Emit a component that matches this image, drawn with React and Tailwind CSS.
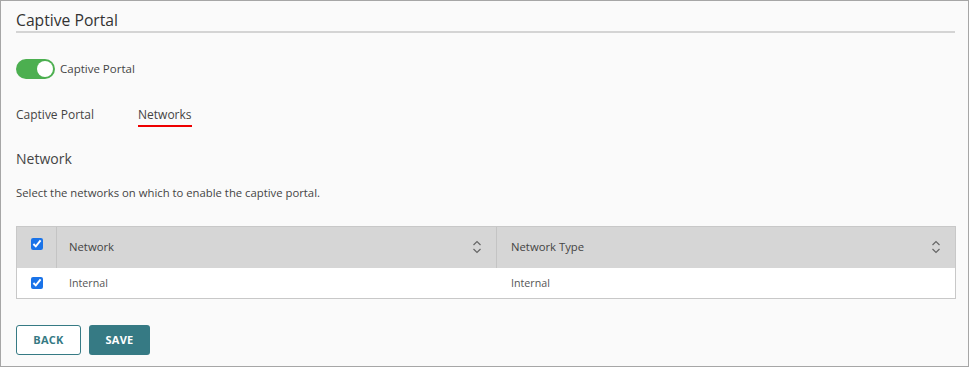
import { useState } from 'react'

function SortIcon() {
  return (
    <svg width="10" height="14" viewBox="0 0 10 14" fill="none" stroke="#666" strokeWidth="1.2">
      <path d="M1.5 5 L5 1.5 L8.5 5" />
      <path d="M1.5 9 L5 12.5 L8.5 9" />
    </svg>
  )
}

function Check({ checked, onChange }) {
  return (
    <input
      type="checkbox"
      checked={checked}
      onChange={onChange}
      className="w-[12px] h-[12px] accent-[#1a73e8] m-0"
    />
  )
}

export default function App() {
  const [enabled, setEnabled] = useState(true)
  const [tab, setTab] = useState('networks')
  const [all, setAll] = useState(true)
  const [row, setRow] = useState(true)

  return (
    <div
      className="w-[969px] h-[367px] bg-[#fafafa] border border-[#a6a6a6] text-[#333] overflow-hidden"
      style={{ fontFamily: '"Open Sans", "Noto Sans", sans-serif' }}
    >
      <div className="px-[15px]">
        <h1 className="text-[15.7px] leading-[22px] pt-[8px] border-b-2 border-[#d4d4d4] mr-[-2px] text-[#333]">
          Captive Portal
        </h1>

        <div className="flex items-center gap-[5px] mt-[26px]">
          <button
            onClick={() => setEnabled(v => !v)}
            className={`w-[39px] h-[20px] rounded-full flex items-center px-[2px] ${enabled ? 'bg-[#4caf50] justify-end' : 'bg-[#bbb] justify-start'}`}
          >
            <span className="w-[16px] h-[16px] rounded-full bg-white block" />
          </button>
          <span className="text-[11.5px] text-[#444]">Captive Portal</span>
        </div>

        <div className="flex gap-[44px] mt-[27px] text-[12px]">
          <button
            onClick={() => setTab('portal')}
            className={`pb-[1px] border-b-2 ${tab === 'portal' ? 'border-[#e00]' : 'border-transparent'} text-[#444]`}
          >
            Captive Portal
          </button>
          <button
            onClick={() => setTab('networks')}
            className={`pb-[1px] border-b-2 ${tab === 'networks' ? 'border-[#e00]' : 'border-transparent'} text-[#444]`}
          >
            Networks
          </button>
        </div>

        <h2 className="text-[14px] text-[#444] mt-[21px]">Network</h2>
        <p className="text-[11.3px] text-[#444] mt-[16px]">Select the networks on which to enable the captive portal.</p>

        <div className="mt-[24px] w-[940px] border border-[#c8c8c8] bg-white text-[11.3px]">
          <div className="flex h-[41px] bg-[#d6d6d6] text-[#444]">
            <div className="w-[40px] flex items-center justify-center border-r border-[#c4c4c4] pb-[6px]">
              <Check checked={all} onChange={() => { setAll(!all); setRow(!all) }} />
            </div>
            <div className="w-[440px] flex items-center justify-between pl-[12px] pr-[14px] border-r border-[#c4c4c4]">
              <span>Network</span>
              <SortIcon />
            </div>
            <div className="flex-1 flex items-center justify-between pl-[14px] pr-[14px]">
              <span>Network Type</span>
              <SortIcon />
            </div>
          </div>
          <div className="flex h-[30px] text-[10.7px] text-[#555]">
            <div className="w-[40px] flex items-center justify-center">
              <Check checked={row} onChange={() => setRow(!row)} />
            </div>
            <div className="w-[440px] flex items-center pl-[12px]">Internal</div>
            <div className="flex-1 flex items-center pl-[14px]">Internal</div>
          </div>
        </div>

        <div className="flex gap-[8px] mt-[26px]">
          <button className="w-[65px] h-[30px] rounded-[3px] border border-[#367a84] bg-white text-[#367a84] text-[11px] font-bold tracking-wide">
            BACK
          </button>
          <button className="w-[61px] h-[30px] rounded-[3px] bg-[#367a84] text-white text-[11px] font-bold tracking-wide">
            SAVE
          </button>
        </div>
      </div>
    </div>
  )
}
